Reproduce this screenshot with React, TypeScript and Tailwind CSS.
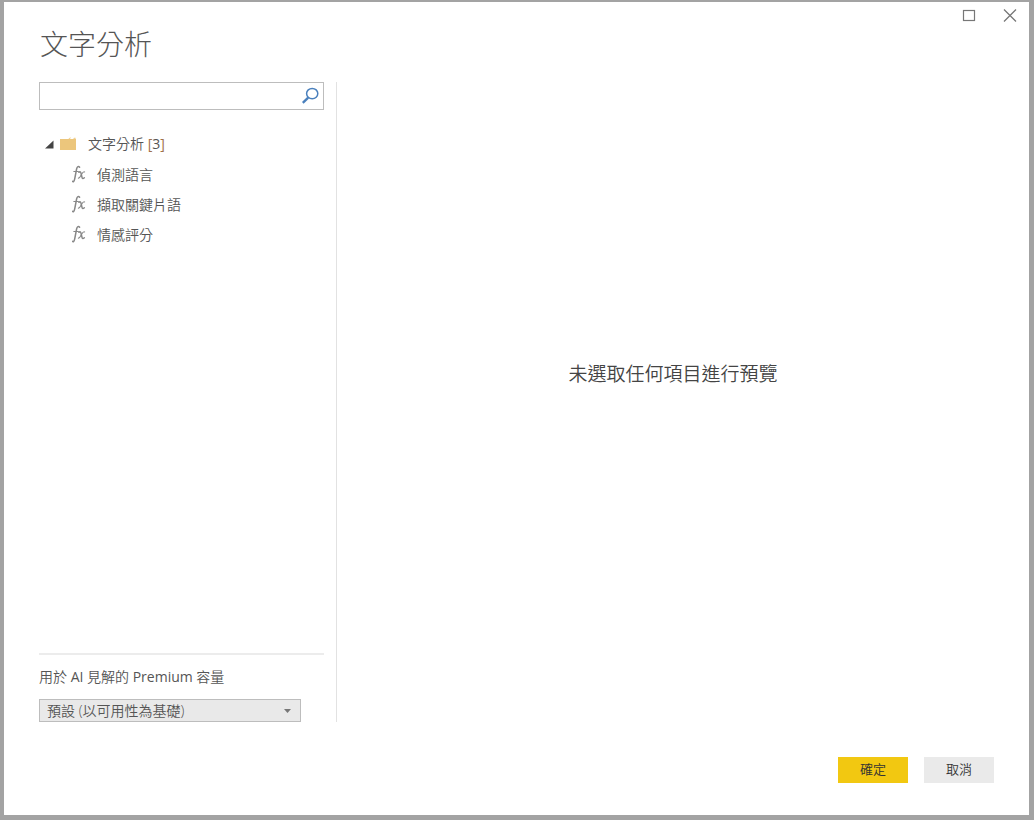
import { useState } from "react";

const functions = ["偵測語言", "擷取關鍵片語", "情感評分"];

function SearchIcon() {
  return (
    <svg width="18" height="18" viewBox="0 0 18 18" fill="none" stroke="#4a80bd" aria-hidden="true">
      <ellipse cx="11.2" cy="6.6" rx="5.6" ry="5.2" strokeWidth="1.5" />
      <path d="M7.2 10.6 1.8 15.8" strokeWidth="2.4" />
    </svg>
  );
}

function FolderIcon() {
  return (
    <svg width="16" height="14" viewBox="0 0 16 14" aria-hidden="true">
      <path d="M8 2.2 10 .4l1 .2-1.2 1.6zM13 2.2l1-1.4h1.6v1.4z" fill="#f0d193" />
      <path d="M0 2h16v11H0z" fill="#ecc67c" />
    </svg>
  );
}

function FxIcon() {
  return (
    <svg width="16" height="20" viewBox="0 0 16 20" fill="none" stroke="#888" strokeLinecap="round" aria-hidden="true">
      <path d="M7.6 2.2C6.6 1 5.2 1.4 4.6 4L2.7 13.8C2.2 16.4 1.2 17.2.4 16.4" strokeWidth="1.5" />
      <path d="M1.8 6.5h4.6" strokeWidth="1" />
      <path d="M6.9 7.3c1.2-1 1.8-.4 2.1.8l1 4.2c.3 1.4 1.1 1.6 2.3.4" strokeWidth="1.5" />
      <path d="M12.6 6.9c-1.2-.6-2.1.8-3 2.4-1 1.9-1.9 4.1-3.2 3.8" strokeWidth="1.1" />
    </svg>
  );
}

function WindowControls() {
  return (
    <div className="flex h-7 items-start justify-end gap-[26px] pr-[11px] pt-1.5">
      <button type="button" aria-label="最大化" className="flex size-4 items-center justify-center">
        <svg width="16" height="16" viewBox="0 0 16 16" fill="none" stroke="#777">
          <rect x="3.5" y="2.5" width="11" height="10" strokeWidth="1.2" />
        </svg>
      </button>
      <button type="button" aria-label="關閉" className="flex size-4 items-center justify-center">
        <svg width="16" height="16" viewBox="0 0 16 16" fill="none" stroke="#777" strokeWidth="1.3">
          <path d="m2 1.5 12 12M14 1.5l-12 12" />
        </svg>
      </button>
    </div>
  );
}

function FunctionTree() {
  const [open, setOpen] = useState(true);

  return (
    <div className="mt-[19px] text-sm text-[#555]">
      <button
        type="button"
        aria-expanded={open}
        onClick={() => setOpen(!open)}
        className="flex h-[30px] items-center pl-1.5"
      >
        <svg width="9" height="9" viewBox="0 0 9 9" aria-hidden="true">
          <path d="M8.5.5v8H0z" fill="#444" />
        </svg>
        <span className="ml-1.5">
          <FolderIcon />
        </span>
        <span className="ml-3">
          文字分析{" "}
          <span className="font-normal">
            <span className="text-[#a0704a]">[</span>3<span className="text-[#a0704a]">]</span>
          </span>
        </span>
      </button>
      {open && (
        <ul className="mt-px">
          {functions.map((name) => (
            <li key={name}>
              <button type="button" className="flex h-[30px] items-center gap-[9px] pl-[33px]">
                <FxIcon />
                {name}
              </button>
            </li>
          ))}
        </ul>
      )}
    </div>
  );
}

export default function App() {
  return (
    <div className="flex min-h-screen flex-col border-b-[5px] border-l-4 border-r-[5px] border-t-2 border-[#a3a3a3] bg-white font-['Open_Sans','Noto_Sans_CJK_TC',sans-serif] font-[350]">
      <WindowControls />
      <h1 className="pl-9 font-['Noto_Sans_CJK_TC',sans-serif] text-[28px] font-light leading-[26px] text-[#555]">
        文字分析
      </h1>

      <div className="mt-[26px] flex grow pl-[35px] pr-5">
        <aside className="flex w-[298px] shrink-0 flex-col border-r border-[#e2e2e2] pr-3">
          <label className="flex h-7 items-center border border-[#bdbdbd] pr-1">
            <input type="text" aria-label="搜尋" className="h-full min-w-0 grow px-2 text-sm outline-none" />
            <SearchIcon />
          </label>

          <FunctionTree />

          <div className="mt-auto border-t-2 border-[#ececec] pt-3 text-sm text-[#555]">
            <label htmlFor="capacity" className="block leading-5">
              用於 <span className="font-normal">AI</span> 見解的 <span className="font-normal">Premium</span> 容量
            </label>
            <div className="relative mt-3 w-[262px]">
              <select
                id="capacity"
                className="block h-[23px] w-full appearance-none border border-[#bdbdbd] bg-[#e9e9e9] pl-[7px] pr-7 leading-5"
              >
                <option>預設 (以可用性為基礎)</option>
              </select>
              <svg
                width="7"
                height="4"
                viewBox="0 0 7 4"
                className="pointer-events-none absolute right-2.5 top-2.5"
                aria-hidden="true"
              >
                <path d="M0 0h7L3.5 4z" fill="#777" />
              </svg>
            </div>
          </div>
        </aside>

        <main className="flex grow items-center justify-center pb-14">
          <p className="text-[19px] leading-6 text-[#444]">未選取任何項目進行預覽</p>
        </main>
      </div>

      <footer className="mt-[35px] flex justify-end gap-4 pb-8 pr-[35px] text-[13px] text-[#333]">
        <button type="button" className="h-[26px] w-[70px] bg-[#f2c811]">
          確定
        </button>
        <button type="button" className="h-[26px] w-[70px] bg-[#eaeaea]">
          取消
        </button>
      </footer>
    </div>
  );
}
